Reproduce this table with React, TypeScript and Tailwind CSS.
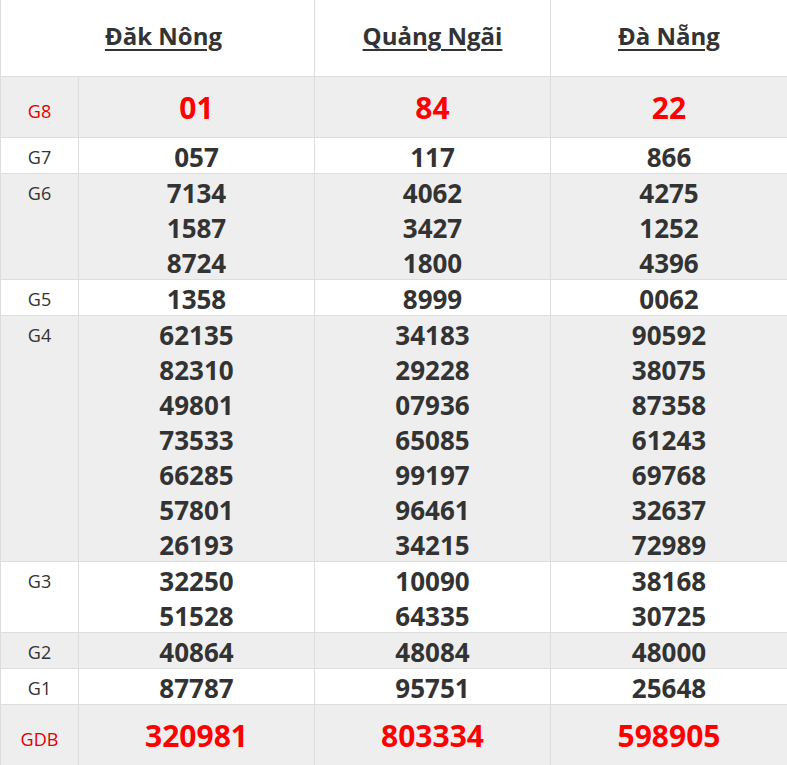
const cities = ["Đăk Nông", "Quảng Ngãi", "Đà Nẵng"];

type Row = { label: string; gray: boolean; big?: boolean; values: string[][] };

const rows: Row[] = [
  { label: "G8", gray: true, big: true, values: [["01"], ["84"], ["22"]] },
  { label: "G7", gray: false, values: [["057"], ["117"], ["866"]] },
  {
    label: "G6",
    gray: true,
    values: [
      ["7134", "1587", "8724"],
      ["4062", "3427", "1800"],
      ["4275", "1252", "4396"],
    ],
  },
  { label: "G5", gray: false, values: [["1358"], ["8999"], ["0062"]] },
  {
    label: "G4",
    gray: true,
    values: [
      ["62135", "82310", "49801", "73533", "66285", "57801", "26193"],
      ["34183", "29228", "07936", "65085", "99197", "96461", "34215"],
      ["90592", "38075", "87358", "61243", "69768", "32637", "72989"],
    ],
  },
  {
    label: "G3",
    gray: false,
    values: [
      ["32250", "51528"],
      ["10090", "64335"],
      ["38168", "30725"],
    ],
  },
  { label: "G2", gray: true, values: [["40864"], ["48084"], ["48000"]] },
  { label: "G1", gray: false, values: [["87787"], ["95751"], ["25648"]] },
  { label: "GDB", gray: true, big: true, values: [["320981"], ["803334"], ["598905"]] },
];

export default function App() {
  return (
    <div className="w-[787px] h-[765px] overflow-hidden bg-white font-['Open_Sans',sans-serif] text-[#333]">
      <table className="w-[787px] table-fixed border-collapse">
        <colgroup>
          <col className="w-[78px]" />
          <col className="w-[236px]" />
          <col className="w-[236px]" />
          <col className="w-[237px]" />
        </colgroup>
        <thead>
          <tr>
            {cities.map((city, i) => (
              <th
                key={city}
                colSpan={i === 0 ? 2 : 1}
                className={`h-[76px] border border-t-0 border-[#ddd] pb-1 text-center align-middle text-[24px] font-bold ${
                  i === 0 ? "pl-3" : ""
                }`}
              >
                <span className="underline decoration-2 underline-offset-[4px]">{city}</span>
              </th>
            ))}
          </tr>
        </thead>
        <tbody>
          {rows.map((row) => (
            <tr key={row.label} className={row.gray ? "bg-[#eeeeee]" : "bg-white"}>
              <td
                className={`border border-[#ddd] text-center align-top text-[18px] leading-[32px] ${
                  row.big ? "pt-[18px] text-[#e00000]" : "pt-[3px] text-[#333]"
                }`}
              >
                {row.label}
              </td>
              {row.values.map((col, ci) => (
                <td
                  key={ci}
                  className={`border border-[#ddd] text-center align-top font-bold ${
                    row.big
                      ? "h-[60px] pt-[13px] pb-[11px] text-[30px] leading-[36px] text-[#ff0000]"
                      : "pt-[2px] text-[26px] leading-[35px] text-[#333]"
                  }`}
                >
                  <div className={row.big ? "" : "-mb-[2px]"}>
                    {col.map((v) => (
                      <div key={v}>{v}</div>
                    ))}
                  </div>
                </td>
              ))}
            </tr>
          ))}
        </tbody>
      </table>
    </div>
  );
}
